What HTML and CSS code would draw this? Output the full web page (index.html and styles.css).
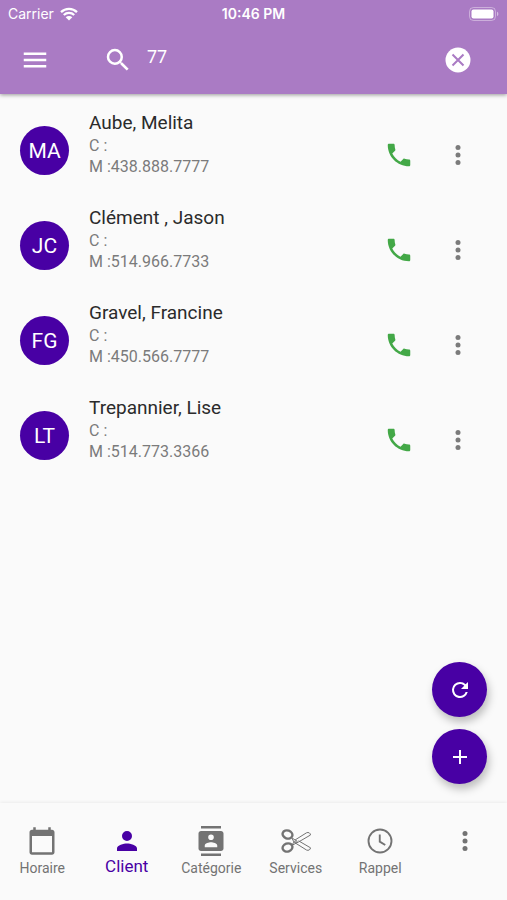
FILE: index.html
```html
<!DOCTYPE html>
<html lang="fr">
<head>
    <meta charset="UTF-8">
    <meta name="viewport" content="width=device-width, initial-scale=1.0">
    <title>Client</title>
    <link rel="stylesheet" href="styles.css">
</head>
<body>

    <!-- Icônes -->
    <svg class="sprite" aria-hidden="true">
        <symbol id="phone" viewBox="0 0 24 24"><path d="M6.62 10.79c1.44 2.83 3.76 5.14 6.59 6.59l2.2-2.2c.27-.27.67-.36 1.02-.24 1.12.37 2.33.57 3.57.57.55 0 1 .45 1 1V20c0 .55-.45 1-1 1C10.61 21 3 13.39 3 4c0-.55.45-1 1-1h3.5c.55 0 1 .45 1 1 0 1.25.2 2.45.57 3.57.11.35.03.74-.25 1.02z"/></symbol>
        <symbol id="more" viewBox="0 0 24 24"><circle cx="12" cy="6" r="2"/><circle cx="12" cy="12" r="2"/><circle cx="12" cy="18" r="2"/></symbol>
    </svg>

    <!-- Entête -->
    <header class="header">
        <div class="status-bar">
            <div class="carrier">
                <span>Carrier</span>
                <svg class="wifi" viewBox="0 0 18 14" aria-hidden="true">
                    <path d="M1 5.2a11.5 11.5 0 0 1 16 0M3.8 8a7.5 7.5 0 0 1 10.4 0" fill="none" stroke="currentColor" stroke-width="2.3"/>
                    <path d="M5.7 10.3a4.7 4.7 0 0 1 6.6 0L9 13.6z"/>
                </svg>
            </div>
            <span class="time">10:46 PM</span>
            <svg class="battery" viewBox="0 0 30 14" aria-hidden="true">
                <rect x="0.5" y="0.5" width="26" height="13" rx="4" fill="none" stroke="currentColor" opacity="0.4"/>
                <rect x="2.500" y="2.500" width="22" height="9" rx="2"/>
                <path d="M28 4.8c1.8.6 1.8 3.8 0 4.4z" opacity="0.5"/>
            </svg>
        </div>
        <div class="search-bar">
            <button class="icon-button" aria-label="Menu">
                <svg class="icon" viewBox="0 0 24 24"><path d="M3 18h18v-2H3v2zm0-5h18v-2H3v2zm0-7v2h18V6H3z"/></svg>
            </button>
            <label class="search-label" for="search" aria-label="Recherche">
                <svg class="icon" viewBox="0 0 24 24"><path d="M15.5 14h-.79l-.28-.27A6.47 6.47 0 0 0 16 9.5 6.5 6.5 0 1 0 9.5 16c1.61 0 3.09-.59 4.23-1.57l.27.28v.79l5 4.99L20.49 19zm-6 0A4.5 4.5 0 1 1 14 9.5 4.5 4.5 0 0 1 9.5 14z"/></svg>
            </label>
            <input class="search-input" id="search" type="text" value="77">
            <button class="icon-button" aria-label="Effacer">
                <svg class="icon" viewBox="0 0 24 24"><circle cx="12" cy="12" r="10"/><path class="cross" d="M7.6 7.6l8.8 8.8M16.4 7.6l-8.8 8.8"/></svg>
            </button>
        </div>
    </header>

    <!-- Liste des clients -->
    <main class="content">
        <ul class="client-list">
            <li class="client">
                <div class="avatar">MA</div>
                <div class="client-info">
                    <h2>Aube, Melita</h2>
                    <p>C :</p>
                    <p>M :438.888.7777</p>
                </div>
                <div class="actions">
                    <button class="icon-button call" aria-label="Appeler"><svg class="icon"><use href="#phone"/></svg></button>
                    <button class="icon-button" aria-label="Options"><svg class="icon"><use href="#more"/></svg></button>
                </div>
            </li>
            <li class="client">
                <div class="avatar">JC</div>
                <div class="client-info">
                    <h2>Clément , Jason</h2>
                    <p>C :</p>
                    <p>M :514.966.7733</p>
                </div>
                <div class="actions">
                    <button class="icon-button call" aria-label="Appeler"><svg class="icon"><use href="#phone"/></svg></button>
                    <button class="icon-button" aria-label="Options"><svg class="icon"><use href="#more"/></svg></button>
                </div>
            </li>
            <li class="client">
                <div class="avatar">FG</div>
                <div class="client-info">
                    <h2>Gravel, Francine</h2>
                    <p>C :</p>
                    <p>M :450.566.7777</p>
                </div>
                <div class="actions">
                    <button class="icon-button call" aria-label="Appeler"><svg class="icon"><use href="#phone"/></svg></button>
                    <button class="icon-button" aria-label="Options"><svg class="icon"><use href="#more"/></svg></button>
                </div>
            </li>
            <li class="client">
                <div class="avatar">LT</div>
                <div class="client-info">
                    <h2>Trepannier, Lise</h2>
                    <p>C :</p>
                    <p>M :514.773.3366</p>
                </div>
                <div class="actions">
                    <button class="icon-button call" aria-label="Appeler"><svg class="icon"><use href="#phone"/></svg></button>
                    <button class="icon-button" aria-label="Options"><svg class="icon"><use href="#more"/></svg></button>
                </div>
            </li>
        </ul>
    </main>

    <!-- Boutons flottants -->
    <div class="fabs">
        <button class="fab" aria-label="Actualiser">
            <svg viewBox="0 0 24 24"><path d="M17.65 6.35A7.96 7.96 0 0 0 12 4a8 8 0 1 0 7.73 10h-2.08A6 6 0 1 1 12 6c1.66 0 3.14.69 4.22 1.78L13 11h7V4z"/></svg>
        </button>
        <button class="fab" aria-label="Ajouter">
            <svg viewBox="0 0 24 24"><path d="M19 13h-6v6h-2v-6H5v-2h6V5h2v6h6z"/></svg>
        </button>
    </div>

    <!-- Navigation -->
    <nav class="nav">
        <a class="nav-item" href="#">
            <svg class="icon" viewBox="0 0 24 24"><path d="M20 3h-1V1h-2v2H7V1H5v2H4c-1.1 0-2 .9-2 2v16c0 1.1.9 2 2 2h16c1.1 0 2-.9 2-2V5c0-1.1-.9-2-2-2zm0 18H4V8h16z"/></svg>
            <span>Horaire</span>
        </a>
        <a class="nav-item active" href="#">
            <svg class="icon" viewBox="0 0 24 24"><path d="M12 12a4 4 0 1 0 0-8 4 4 0 0 0 0 8zm0 2c-2.67 0-8 1.34-8 4v2h16v-2c0-2.66-5.33-4-8-4z"/></svg>
            <span>Client</span>
        </a>
        <a class="nav-item" href="#">
            <svg class="icon" viewBox="0 0 24 24"><path d="M20 0H4v2h16zM4 24h16v-2H4zM20 4H4c-1.1 0-2 .9-2 2v12c0 1.1.9 2 2 2h16c1.1 0 2-.9 2-2V6c0-1.1-.9-2-2-2zm-8 2.75a2.25 2.25 0 1 1 0 4.5 2.25 2.25 0 0 1 0-4.5zM17 17H7v-1.5c0-1.67 3.33-2.5 5-2.5s5 .83 5 2.5z"/></svg>
            <span>Catégorie</span>
        </a>
        <a class="nav-item" href="#">
            <svg class="icon" viewBox="0 0 30 30" fill="none" stroke="currentColor">
                <ellipse cx="6.5" cy="8.5" rx="5" ry="4" transform="rotate(20 6.5 8.5)" stroke-width="2.4"/>
                <ellipse cx="6.5" cy="21.5" rx="5" ry="4" transform="rotate(-20 6.5 21.5)" stroke-width="2.4"/>
                <path d="M10.5 11.5L14 14 25.5 6.8c2-1 4 .4 4 2.2L17.5 16l-7 3.500M10.5 11.5l3 5.500M14 16.8L25.5 24c2 1 4-.4 4-2.2l-12-7M10.5 19.5l3-4"/>
                <circle cx="15" cy="15.5" r="1"/>
            </svg>
            <span>Services</span>
        </a>
        <a class="nav-item" href="#">
            <svg class="icon" viewBox="0 0 24 24" fill="none" stroke="currentColor"><circle cx="12" cy="12" r="9.2" stroke-width="1.5"/><path d="M11.8 6.8v5.7l4.4 2.7" stroke-width="1.5"/></svg>
            <span>Rappel</span>
        </a>
        <a class="nav-item" href="#" aria-label="Plus">
            <svg class="icon"><use href="#more"/></svg>
        </a>
    </nav>

</body>
</html>
```
FILE: styles.css
```css
* {
    box-sizing: border-box;
}
body {
    display: flex;
    flex-direction: column;
    min-height: 100vh;
    margin: 0;
    font-family: Roboto, "Liberation Sans", sans-serif;
    background-color: #fafafa;
    color: #2b2b2b;
}
.sprite {
    display: none;
}
button {
    padding: 0;
    border: none;
    background: none;
    cursor: pointer;
}
svg {
    display: block;
    fill: currentColor;
}
svg[fill="none"] {
    fill: none;
}
.icon {
    width: 30px;
    height: 30px;
}
.icon-button {
    display: flex;
    align-items: center;
    justify-content: center;
    width: 48px;
    height: 48px;
    flex-shrink: 0;
    color: inherit;
}
.header {
    background-color: #aa7bc4;
    color: #fff;
    box-shadow: 0 1px 4px rgba(0, 0, 0, 0.4);
}
.status-bar {
    display: grid;
    grid-template-columns: 1fr auto 1fr;
    align-items: center;
    height: 27px;
    padding: 0 8px;
    font-family: Inter, "Liberation Sans", sans-serif;
    font-size: 14px;
}
.carrier {
    display: flex;
    align-items: center;
    gap: 6px;
}
.wifi {
    width: 18px;
    height: 14px;
}
.time {
    font-weight: 600;
}
.battery {
    width: 30px;
    height: 14px;
    justify-self: end;
}
.search-bar {
    display: flex;
    align-items: center;
    height: 67px;
    padding: 0 25px 2px 11px;
}
.search-label {
    margin-left: 44px;
}
.search-input {
    flex: 1;
    min-width: 0;
    height: 48px;
    margin-left: 14px;
    padding: 0 0 6px;
    border: none;
    outline: none;
    background: none;
    color: inherit;
    font-family: inherit;
    font-size: 18px;
}
.cross {
    fill: none;
    stroke: #aa7bc4;
    stroke-width: 1.6;
}
.content {
    flex: 1;
}
.client-list {
    list-style: none;
    margin: 0;
    padding: 16px 0 0;
}
.client {
    display: flex;
    align-items: flex-start;
    gap: 20px;
    height: 95px;
    padding: 0 25px 0 20px;
}
.avatar {
    display: flex;
    align-items: center;
    justify-content: center;
    width: 49px;
    height: 49px;
    margin-top: 16px;
    border-radius: 50%;
    background-color: #4800a4;
    color: #fff;
    font-size: 21px;
}
.client-info {
    flex: 1;
}
.client-info h2 {
    margin: 0;
    font-size: 19px;
    font-weight: 400;
    line-height: 25px;
}
.client-info p {
    margin: 0;
    font-size: 16px;
    line-height: 21px;
    color: #7b7b7b;
}
.actions {
    display: flex;
    gap: 11px;
    margin-top: 21px;
    color: #7b7b7b;
}
.call {
    color: #43a847;
}
.fabs {
    position: fixed;
    right: 20px;
    bottom: 116px;
    display: flex;
    flex-direction: column;
    gap: 12px;
}
.fab {
    display: flex;
    align-items: center;
    justify-content: center;
    width: 55px;
    height: 55px;
    border-radius: 50%;
    background-color: #4800a4;
    color: #fff;
    box-shadow: 2px 5px 8px rgba(0, 0, 0, 0.25);
}
.fab svg {
    width: 24px;
    height: 24px;
}
.nav {
    display: grid;
    grid-template-columns: repeat(6, 1fr);
    height: 97px;
    padding-top: 23px;
    box-shadow: 0 -1px 3px rgba(0, 0, 0, 0.06);
}
.nav-item {
    display: flex;
    flex-direction: column;
    align-items: center;
    color: #737373;
    font-size: 14px;
    line-height: 24px;
    text-decoration: none;
}
.active {
    color: #4800a4;
    font-size: 17px;
    line-height: 20px;
}
```
